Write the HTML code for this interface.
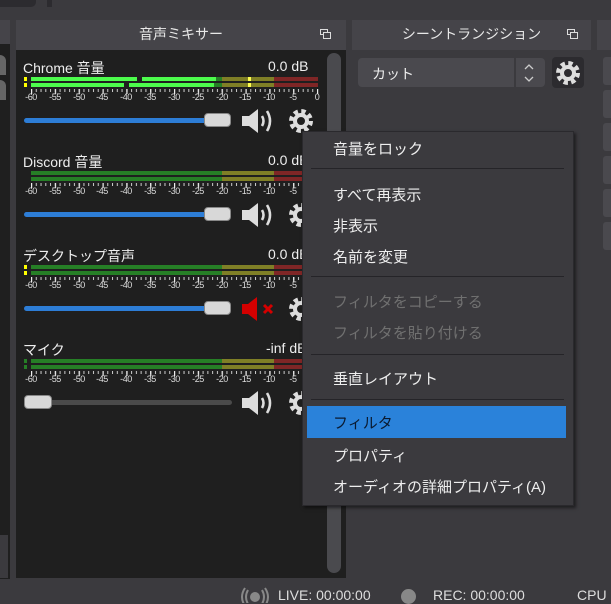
<!DOCTYPE html>
<html><head><meta charset="utf-8"><style>
*{margin:0;padding:0;box-sizing:border-box}
body{width:611px;height:603px;overflow:hidden;background:#3b3a3e;font-family:"Liberation Sans","Noto Sans CJK JP",sans-serif;color:#e6e6e6;position:relative}
.a{position:absolute}
.hdr{background:#454449;font-size:14px;text-align:center;line-height:29px;color:#e8e8e8}
.lbl{font-size:14px;color:#eee}
.db{font-size:14px;color:#eee}
.sc{font-size:9px;color:#ddd;width:20px;text-align:center;letter-spacing:-0.4px}
.mi{position:absolute;left:30px;font-size:15px;color:#eee}
.sep{position:absolute;left:8px;width:253px;height:1px;background:#252428}
.dis{color:#707070}
</style></head><body>
<div class="a" style="left:0;top:0;width:36px;height:7px;background:#2c2b2f;border-radius:0 0 5px 0"></div>
<div class="a" style="left:47px;top:0;width:5px;height:7px;background:#2c2b2f"></div>
<div class="a" style="left:0;top:20px;width:10px;height:24px;background:#454449"></div>
<div class="a" style="left:0;top:44px;width:10px;height:535px;background:#1f1f1f"></div>
<div class="a" style="left:0;top:55px;width:6px;height:20px;background:#666;border-radius:0 6px 0 0"></div>
<div class="a" style="left:0;top:80px;width:6px;height:20px;background:#666;border-radius:0 6px 0 0"></div>
<div class="a" style="left:0;top:535px;width:8px;height:43px;background:#3b3a3e"></div>
<div class="a hdr" style="left:16px;top:20px;width:330px;height:30px">音声ミキサー</div>
<svg class="a" style="left:320px;top:29px" width="12" height="11"><rect x="0.5" y="0.5" width="7" height="5" fill="none" stroke="#ddd"/><rect x="3.5" y="3.5" width="7" height="6" fill="#454449" stroke="#ddd"/></svg>
<div class="a" style="left:16px;top:50px;width:330px;height:528px;background:#1f1f1f"></div>
<div class="a" style="left:327px;top:53px;width:14px;height:520px;background:#4a4a4e;border-radius:7px"></div>

<svg width="0" height="0" style="position:absolute"><defs>
<pattern id="mn" x="31" y="0" width="4.7667" height="10" patternUnits="userSpaceOnUse"><rect x="0" y="0" width="1" height="3" fill="#ccc"/></pattern>
<pattern id="mj" x="31" y="0" width="23.833" height="10" patternUnits="userSpaceOnUse"><rect x="0" y="0" width="1.2" height="5" fill="#eee"/></pattern>
<symbol id="spk" viewBox="0 0 34 26"><path d="M1 8h7l9-7v24l-9-7H1z" fill="#ddd"/><path d="M21 8q3 5 0 10" fill="none" stroke="#ddd" stroke-width="2.6"/><path d="M26 3q6 10 0 20" fill="none" stroke="#ddd" stroke-width="2.6"/></symbol>
<symbol id="gear" viewBox="0 0 24 24"><circle cx="12" cy="12" r="9.5" fill="none" stroke="#ddd" stroke-width="5" stroke-dasharray="4.2 3.26"/><circle cx="12" cy="12" r="6" fill="none" stroke="#ddd" stroke-width="4"/></symbol>
</defs></svg>

<div class="a" style="left:0;top:61px;width:346px;height:70px">
 <div class="a lbl" style="left:23px;top:-3px">Chrome 音量</div>
 <div class="a db" style="left:268px;top:-3px">0.0 dB</div>
 <div class="a" style="left:24px;top:16px;width:3px;height:4px;background:#ff0"></div>
 <div class="a" style="left:24px;top:22px;width:3px;height:4px;background:#ff0"></div>
 <div class="a" style="left:31px;top:16px;width:287px;height:4px;background:linear-gradient(90deg,#4cfc4c 0 106px,#1f1f1f 106px 111px,#4cfc4c 111px 185px,#267f26 185px 191px,#7f7f26 191px 217px,#ffff50 217px 220px,#7f7f26 220px 243px,#7f2626 243px)"></div>
 <div class="a" style="left:31px;top:22px;width:287px;height:4px;background:linear-gradient(90deg,#4cfc4c 0 93px,#1f1f1f 93px 98px,#4cfc4c 98px 183px,#267f26 183px 191px,#7f7f26 191px 217px,#ffff50 217px 220px,#7f7f26 220px 243px,#7f2626 243px)"></div>
 <svg class="a" style="left:0;top:28px" width="320" height="6"><rect x="31" y="0" width="287" height="3" fill="url(#mn)"/><rect x="31" y="0" width="288" height="5" fill="url(#mj)"/></svg>
 <div class="a" style="left:21px;top:31px"><span class="a sc" style="left:0">-60</span><span class="a sc" style="left:24px">-55</span><span class="a sc" style="left:48px">-50</span><span class="a sc" style="left:71px">-45</span><span class="a sc" style="left:95px">-40</span><span class="a sc" style="left:119px">-35</span><span class="a sc" style="left:143px">-30</span><span class="a sc" style="left:167px">-25</span><span class="a sc" style="left:191px">-20</span><span class="a sc" style="left:214px">-15</span><span class="a sc" style="left:238px">-10</span><span class="a sc" style="left:262px">-5</span><span class="a sc" style="left:286px">0</span></div>
 <div class="a" style="left:24px;top:57px;width:185px;height:5px;background:#2d7dd6;border-radius:3px"></div>
 <div class="a" style="left:204px;top:52px;width:27px;height:14px;background:#d8d8d8;border:1px solid #888;border-radius:4px"></div>
 <svg class="a" style="left:241px;top:47px" width="34" height="26"><use href="#spk"/></svg>
 <svg class="a" style="left:289px;top:48px" width="24" height="24"><use href="#gear"/></svg>
</div>

<div class="a" style="left:0;top:155px;width:346px;height:70px">
 <div class="a lbl" style="left:23px;top:-3px">Discord 音量</div>
 <div class="a db" style="left:268px;top:-3px">0.0 dB</div>
 <div class="a" style="left:31px;top:16px;width:287px;height:4px;background:linear-gradient(90deg,#267f26 0 191px,#7f7f26 191px 243px,#7f2626 243px)"></div>
 <div class="a" style="left:31px;top:22px;width:287px;height:4px;background:linear-gradient(90deg,#267f26 0 191px,#7f7f26 191px 243px,#7f2626 243px)"></div>
 <svg class="a" style="left:0;top:28px" width="320" height="6"><rect x="31" y="0" width="287" height="3" fill="url(#mn)"/><rect x="31" y="0" width="288" height="5" fill="url(#mj)"/></svg>
 <div class="a" style="left:21px;top:31px"><span class="a sc" style="left:0">-60</span><span class="a sc" style="left:24px">-55</span><span class="a sc" style="left:48px">-50</span><span class="a sc" style="left:71px">-45</span><span class="a sc" style="left:95px">-40</span><span class="a sc" style="left:119px">-35</span><span class="a sc" style="left:143px">-30</span><span class="a sc" style="left:167px">-25</span><span class="a sc" style="left:191px">-20</span><span class="a sc" style="left:214px">-15</span><span class="a sc" style="left:238px">-10</span><span class="a sc" style="left:262px">-5</span><span class="a sc" style="left:286px">0</span></div>
 <div class="a" style="left:24px;top:57px;width:185px;height:5px;background:#2d7dd6;border-radius:3px"></div>
 <div class="a" style="left:204px;top:52px;width:27px;height:14px;background:#d8d8d8;border:1px solid #888;border-radius:4px"></div>
 <svg class="a" style="left:241px;top:47px" width="34" height="26"><use href="#spk"/></svg>
 <svg class="a" style="left:289px;top:48px" width="24" height="24"><use href="#gear"/></svg>
</div>

<div class="a" style="left:0;top:249px;width:346px;height:70px">
 <div class="a lbl" style="left:23px;top:-3px">デスクトップ音声</div>
 <div class="a db" style="left:268px;top:-3px">0.0 dB</div>
 <div class="a" style="left:24px;top:16px;width:3px;height:4px;background:#ff0"></div>
 <div class="a" style="left:24px;top:22px;width:3px;height:4px;background:#ff0"></div>
 <div class="a" style="left:31px;top:16px;width:287px;height:4px;background:linear-gradient(90deg,#267f26 0 191px,#7f7f26 191px 243px,#7f2626 243px)"></div>
 <div class="a" style="left:31px;top:22px;width:287px;height:4px;background:linear-gradient(90deg,#267f26 0 191px,#7f7f26 191px 243px,#7f2626 243px)"></div>
 <svg class="a" style="left:0;top:28px" width="320" height="6"><rect x="31" y="0" width="287" height="3" fill="url(#mn)"/><rect x="31" y="0" width="288" height="5" fill="url(#mj)"/></svg>
 <div class="a" style="left:21px;top:31px"><span class="a sc" style="left:0">-60</span><span class="a sc" style="left:24px">-55</span><span class="a sc" style="left:48px">-50</span><span class="a sc" style="left:71px">-45</span><span class="a sc" style="left:95px">-40</span><span class="a sc" style="left:119px">-35</span><span class="a sc" style="left:143px">-30</span><span class="a sc" style="left:167px">-25</span><span class="a sc" style="left:191px">-20</span><span class="a sc" style="left:214px">-15</span><span class="a sc" style="left:238px">-10</span><span class="a sc" style="left:262px">-5</span><span class="a sc" style="left:286px">0</span></div>
 <div class="a" style="left:24px;top:57px;width:185px;height:5px;background:#2d7dd6;border-radius:3px"></div>
 <div class="a" style="left:204px;top:52px;width:27px;height:14px;background:#d8d8d8;border:1px solid #888;border-radius:4px"></div>
 <svg class="a" style="left:241px;top:47px" width="36" height="26"><path d="M1 8h6l9-7v24l-9-7H1z" fill="#d40000"/><path d="M23 9l8 8M31 9l-8 8" stroke="#d40000" stroke-width="3"/></svg>
 <svg class="a" style="left:289px;top:48px" width="24" height="24"><use href="#gear"/></svg>
</div>

<div class="a" style="left:0;top:343px;width:346px;height:70px">
 <div class="a lbl" style="left:23px;top:-3px">マイク</div>
 <div class="a db" style="left:266px;top:-3px">-inf dB</div>
 <div class="a" style="left:24px;top:16px;width:3px;height:4px;background:#267f26"></div>
 <div class="a" style="left:24px;top:22px;width:3px;height:4px;background:#267f26"></div>
 <div class="a" style="left:31px;top:16px;width:287px;height:4px;background:linear-gradient(90deg,#267f26 0 191px,#7f7f26 191px 243px,#7f2626 243px)"></div>
 <div class="a" style="left:31px;top:22px;width:287px;height:4px;background:linear-gradient(90deg,#267f26 0 191px,#7f7f26 191px 243px,#7f2626 243px)"></div>
 <svg class="a" style="left:0;top:28px" width="320" height="6"><rect x="31" y="0" width="287" height="3" fill="url(#mn)"/><rect x="31" y="0" width="288" height="5" fill="url(#mj)"/></svg>
 <div class="a" style="left:21px;top:31px"><span class="a sc" style="left:0">-60</span><span class="a sc" style="left:24px">-55</span><span class="a sc" style="left:48px">-50</span><span class="a sc" style="left:71px">-45</span><span class="a sc" style="left:95px">-40</span><span class="a sc" style="left:119px">-35</span><span class="a sc" style="left:143px">-30</span><span class="a sc" style="left:167px">-25</span><span class="a sc" style="left:191px">-20</span><span class="a sc" style="left:214px">-15</span><span class="a sc" style="left:238px">-10</span><span class="a sc" style="left:262px">-5</span><span class="a sc" style="left:286px">0</span></div>
 <div class="a" style="left:24px;top:57px;width:208px;height:5px;background:#4a4a4a;border-radius:3px"></div>
 <div class="a" style="left:24px;top:52px;width:28px;height:14px;background:#d8d8d8;border:1px solid #888;border-radius:4px"></div>
 <svg class="a" style="left:241px;top:47px" width="34" height="26"><use href="#spk"/></svg>
 <svg class="a" style="left:289px;top:48px" width="24" height="24"><use href="#gear"/></svg>
</div>

<div class="a hdr" style="left:352px;top:20px;width:239px;height:30px">シーントランジション</div>
<svg class="a" style="left:567px;top:29px" width="12" height="11"><rect x="0.5" y="0.5" width="7" height="5" fill="none" stroke="#ddd"/><rect x="3.5" y="3.5" width="7" height="6" fill="#454449" stroke="#ddd"/></svg>
<div class="a" style="left:358px;top:58px;width:187px;height:29px;background:#4a494e;border-radius:4px"></div>
<div class="a" style="left:514px;top:58px;width:2px;height:29px;background:#3b3a3e"></div>
<div class="a" style="left:372px;top:64px;font-size:14px;color:#eee">カット</div>
<svg class="a" style="left:522px;top:62px" width="14" height="22"><path d="M3 7l4-4 4 4M3 15l4 4 4-4" fill="none" stroke="#ccc" stroke-width="1.3"/></svg>
<div class="a" style="left:552px;top:57px;width:32px;height:31px;background:#2c2b2f;border-radius:4px"></div>
<svg class="a" style="left:556px;top:61px" width="24" height="24"><use href="#gear"/></svg>
<div class="a" style="left:597px;top:20px;width:14px;height:30px;background:#454449"></div>
<div class="a" style="left:603px;top:57px;width:8px;height:28px;background:#4a494e;border-radius:3px 0 0 3px"></div>
<div class="a" style="left:603px;top:90px;width:8px;height:28px;background:#4a494e;border-radius:3px 0 0 3px"></div>
<div class="a" style="left:603px;top:123px;width:8px;height:28px;background:#4a494e;border-radius:3px 0 0 3px"></div>
<div class="a" style="left:603px;top:156px;width:8px;height:28px;background:#4a494e;border-radius:3px 0 0 3px"></div>
<div class="a" style="left:603px;top:189px;width:8px;height:28px;background:#4a494e;border-radius:3px 0 0 3px"></div>
<div class="a" style="left:603px;top:222px;width:8px;height:28px;background:#4a494e;border-radius:3px 0 0 3px"></div>

<div class="a" style="left:302px;top:131px;width:272px;height:375px;background:#3b3a3e;border:1px solid #2a292d;box-shadow:2px 2px 3px rgba(0,0,0,.5)">
 <div class="mi" style="top:6px">音量をロック</div>
 <div class="sep" style="top:36px"></div>
 <div class="mi" style="top:52px">すべて再表示</div>
 <div class="mi" style="top:83px">非表示</div>
 <div class="mi" style="top:114px">名前を変更</div>
 <div class="sep" style="top:144px"></div>
 <div class="mi dis" style="top:159px">フィルタをコピーする</div>
 <div class="mi dis" style="top:190px">フィルタを貼り付ける</div>
 <div class="sep" style="top:222px"></div>
 <div class="mi" style="top:236px">垂直レイアウト</div>
 <div class="sep" style="top:267px"></div>
 <div class="a" style="left:4px;top:274px;width:259px;height:32px;background:#2a82da"></div>
 <div class="mi" style="top:280px;color:#0a1a30">フィルタ</div>
 <div class="mi" style="top:313px">プロパティ</div>
 <div class="mi" style="top:344px">オーディオの詳細プロパティ(A)</div>
</div>

<svg class="a" style="left:240px;top:587px" width="30" height="16"><circle cx="15" cy="10" r="5" fill="#888"/><path d="M8 3q-4 7 0 14M22 3q4 7 0 14M5 1q-6 9 0 18M25 1q6 9 0 18" fill="none" stroke="#888" stroke-width="2"/></svg>
<div class="a" style="left:278px;top:587px;font-size:14px;color:#ddd">LIVE: 00:00:00</div>
<div class="a" style="left:401px;top:589px;width:15px;height:15px;border-radius:50%;background:#888"></div>
<div class="a" style="left:433px;top:587px;font-size:14px;color:#ddd">REC: 00:00:00</div>
<div class="a" style="left:577px;top:587px;font-size:14px;color:#ddd">CPU</div>
</body></html>
